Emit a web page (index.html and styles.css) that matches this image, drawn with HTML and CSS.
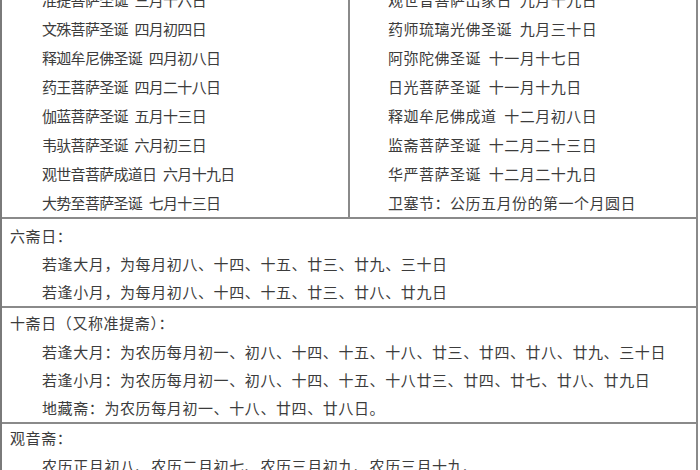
FILE: index.html
```html
<!DOCTYPE html>
<html lang="zh-CN">
<head>
<meta charset="utf-8">
<title>佛菩萨圣诞与斋日</title>
<link rel="stylesheet" href="styles.css">
</head>
<body>
<div class="sheet">
  <div class="top">
    <div class="col col-left">
      <div class="item">准提菩萨圣诞 三月十六日</div>
      <div class="item">文殊菩萨圣诞 四月初四日</div>
      <div class="item">释迦牟尼佛圣诞 四月初八日</div>
      <div class="item">药王菩萨圣诞 四月二十八日</div>
      <div class="item">伽蓝菩萨圣诞 五月十三日</div>
      <div class="item">韦驮菩萨圣诞 六月初三日</div>
      <div class="item">观世音菩萨成道日 六月十九日</div>
      <div class="item">大势至菩萨圣诞 七月十三日</div>
    </div>
    <div class="col col-right">
      <div class="item">观世音菩萨出家日 九月十九日</div>
      <div class="item">药师琉璃光佛圣诞 九月三十日</div>
      <div class="item">阿弥陀佛圣诞 十一月十七日</div>
      <div class="item">日光菩萨圣诞 十一月十九日</div>
      <div class="item">释迦牟尼佛成道 十二月初八日</div>
      <div class="item">监斋菩萨圣诞 十二月二十三日</div>
      <div class="item">华严菩萨圣诞 十二月二十九日</div>
      <div class="item">卫塞节：公历五月份的第一个月圆日</div>
    </div>
  </div>
  <div class="sec sec-six">
    <div class="head">六斋日：</div>
    <div class="row">若逢大月，为每月初八、十四、十五、廿三、廿九、三十日</div>
    <div class="row">若逢小月，为每月初八、十四、十五、廿三、廿八、廿九日</div>
  </div>
  <div class="sec sec-ten">
    <div class="head head-tall">十斋日（又称准提斋）：</div>
    <div class="row">若逢大月：为农历每月初一、初八、十四、十五、十八、廿三、廿四、廿八、廿九、三十日</div>
    <div class="row">若逢小月：为农历每月初一、初八、十四、十五、十八廿三、廿四、廿七、廿八、廿九日</div>
    <div class="row">地藏斋：为农历每月初一、十八、廿四、廿八日。</div>
  </div>
  <div class="sec sec-gy">
    <div class="head">观音斋：</div>
    <div class="row">农历正月初八、农历二月初七、农历三月初九、农历三月十九、</div>
  </div>
</div>
</body>
</html>
```

FILE: styles.css
```css
html, body {
  margin: 0;
  padding: 0;
  background: #ffffff;
  overflow: hidden;
}

body {
  font-family: "Noto Sans CJK SC", "Noto Sans CJK JP", sans-serif;
  font-size: 15px;
  color: #3c3c3c;
}

.sheet {
  width: 694px;
  margin-top: -15px;
  border-left: 2px solid #7a7a7a;
  border-right: 2px solid #8a8a8a;
}

.top {
  display: grid;
  grid-template-columns: 346px 1fr;
  border-bottom: 2px solid #8a8a8a;
}

.col {
  display: flex;
  flex-direction: column;
}

.col-left {
  padding-left: 40px;
  letter-spacing: -0.7px;
}

.col-right {
  padding-left: 38px;
  border-left: 2px solid #8a8a8a;
  letter-spacing: 0.5px;
}

.item {
  line-height: 29px;
  height: 29px;
  white-space: nowrap;
  word-spacing: 4px;
}

.sec {
  padding-left: 8px;
  border-bottom: 2px solid #8a8a8a;
  letter-spacing: 0.6px;
  white-space: nowrap;
}

.sec-six {
  padding-top: 3px;
}

.sec-gy {
  border-bottom: none;
}

.head {
  line-height: 28px;
  height: 28px;
}

.head-tall {
  height: 30px;
  line-height: 30px;
}

.row {
  padding-left: 32px;
  line-height: 28px;
  height: 28px;
}
```
